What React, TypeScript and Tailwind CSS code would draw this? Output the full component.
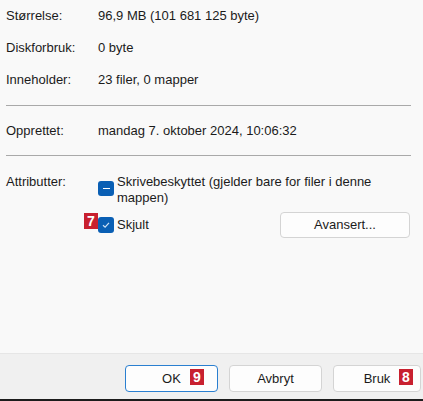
import React from 'react';

function Badge({ n }: { n: string }) {
  return (
    <span className="absolute flex items-center justify-center bg-[#c8202f] text-white font-bold text-[14px] leading-none w-[14px] h-[16px]">
      {n}
    </span>
  );
}

function Btn({ label, primary, badge }: { label: string; primary?: boolean; badge?: React.ReactNode }) {
  return (
    <div
      className={
        'relative h-[27px] rounded-[4px] bg-[#fdfdfd] flex items-center justify-center border ' +
        (primary ? 'border-[#2a7fd0]' : 'border-[#d4d4d4]')
      }
    >
      {label}
      {badge}
    </div>
  );
}

export default function App() {
  return (
    <div className="w-[423px] h-[401px] bg-[#f9f9f9] flex flex-col font-['Liberation_Sans',Arial,sans-serif] text-[13px] text-[#1b1b1b] overflow-hidden">
      <div className="flex-1 px-[6px]">
        <div className="grid grid-cols-[92px_1fr]">
          <div className="h-[32px] flex items-center">Størrelse:</div>
          <div className="h-[32px] flex items-center">96,9 MB (101 681 125 byte)</div>
          <div className="h-[32px] flex items-center">Diskforbruk:</div>
          <div className="h-[32px] flex items-center">0 byte</div>
          <div className="h-[32px] flex items-center">Inneholder:</div>
          <div className="h-[32px] flex items-center">23 filer, 0 mapper</div>
        </div>
        <div className="mt-[9px] mr-[6px] h-px bg-[#a9a9a9]" />
        <div className="grid grid-cols-[92px_1fr]">
          <div className="h-[49px] flex items-center">Opprettet:</div>
          <div className="h-[49px] flex items-center">mandag 7. oktober 2024, 10:06:32</div>
        </div>
        <div className="mr-[6px] h-px bg-[#a9a9a9]" />
        <div className="grid grid-cols-[92px_1fr] pt-[18px] leading-[16px]">
          <div>Attributter:</div>
          <div className="flex flex-col">
            <div className="flex items-start gap-[3px] pr-[8px]">
              <span className="mt-[7px] shrink-0 w-[16px] h-[15px] rounded-[3px] bg-[#0a5fb4] flex items-center justify-center">
                <span className="w-[7px] h-[1.5px] bg-white" />
              </span>
              <span>Skrivebeskyttet (gjelder bare for filer i denne mappen)</span>
            </div>
            <div className="flex items-center mt-[6px] pr-[7px]">
              <div className="relative flex items-center gap-[3px]">
                <span className="w-[16px] h-[16px] rounded-[3px] bg-[#0a5fb4] flex items-center justify-center">
                  <svg width="10" height="10" viewBox="0 0 10 10">
                    <path d="M2 5.2 L4.1 7.2 L8 2.8" fill="none" stroke="#cfe2f5" strokeWidth="1.2" />
                  </svg>
                </span>
                <span>Skjult</span>
                <span className="absolute left-[-14px] top-[-4px]">
                  <Badge n="7" />
                </span>
              </div>
              <div className="ml-auto w-[130px] h-[26px] rounded-[4px] border border-[#d4d4d4] bg-[#fdfdfd] flex items-center justify-center">
                Avansert...
              </div>
            </div>
          </div>
        </div>
      </div>
      <div className="h-[46px] bg-[#f0f0f0] border-t border-[#e6e6e6] grid grid-cols-[93px_93px_88px] gap-[11px] pl-[125px] pt-[11px]">
        <Btn
          label="OK"
          primary
          badge={
            <span className="absolute left-[64px] top-[3px]">
              <Badge n="9" />
            </span>
          }
        />
        <Btn label="Avbryt" />
        <Btn
          label="Bruk"
          badge={
            <span className="absolute left-[65px] top-[3px]">
              <Badge n="8" />
            </span>
          }
        />
      </div>
      <div className="h-[2px] bg-[#1c1c1c]" />
    </div>
  );
}
